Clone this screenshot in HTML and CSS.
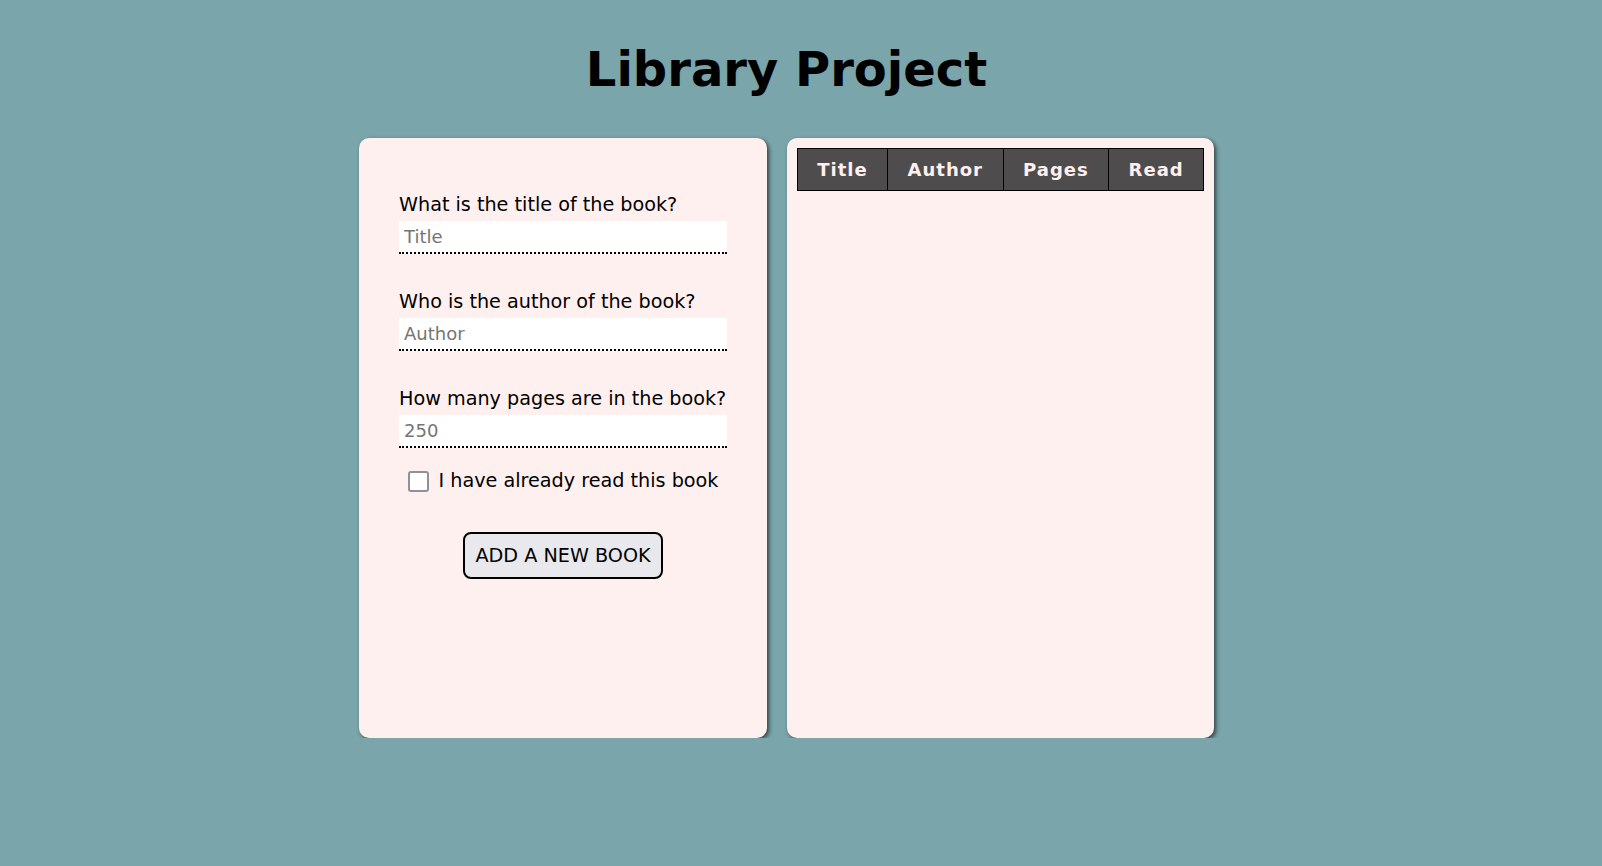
FILE: index.html
```html
<!DOCTYPE html>
<html lang="en">
<head>
<meta charset="utf-8">
<title>Library Project</title>
<link rel="stylesheet" href="styles.css">
</head>
<body>
<div class="app">
  <h1 class="title">Library Project</h1>
  <div class="panels">
    <section class="panel form-panel">
      <form class="book-form">
        <div class="field">
          <label class="label" for="title">What is the title of the book?</label>
          <input class="input" id="title" type="text" placeholder="Title">
        </div>
        <div class="field">
          <label class="label" for="author">Who is the author of the book?</label>
          <input class="input" id="author" type="text" placeholder="Author">
        </div>
        <div class="field field-last">
          <label class="label" for="pages">How many pages are in the book?</label>
          <input class="input" id="pages" type="number" placeholder="250">
        </div>
        <div class="check-row">
          <input class="check" id="read" type="checkbox">
          <label class="check-label" for="read">I have already read this book</label>
        </div>
        <div class="btn-row">
          <button class="btn" type="button">ADD A NEW BOOK</button>
        </div>
      </form>
    </section>
    <section class="panel table-panel">
      <table class="books">
        <thead>
          <tr>
            <th>Title</th>
            <th>Author</th>
            <th>Pages</th>
            <th>Read</th>
          </tr>
        </thead>
        <tbody></tbody>
      </table>
    </section>
  </div>
</div>
</body>
</html>
```

FILE: styles.css
```css
html, body {
  background: #7aa5ab;
}
body {
  margin: 8px;
  font-family: "DejaVu Sans", sans-serif;
  color: #000;
}
.app {
  width: 855px;
  margin-left: 351px;
}
.title {
  font-size: 48px;
  font-weight: bold;
  text-align: center;
  margin: 33px 0 41px;
  line-height: normal;
}
.panels {
  display: flex;
  gap: 20px;
  align-items: flex-start;
}
.panel {
  background: #fff0f0;
  border-radius: 10px;
  height: 600px;
  box-sizing: border-box;
  box-shadow: 2px 2px 4px rgba(0, 0, 0, 0.6);
}
.form-panel {
  width: 408px;
  padding: 56px 40px 0;
}
.table-panel {
  width: 427px;
  padding: 10px;
}
.book-form {
  display: flex;
  flex-direction: column;
}
.field {
  display: flex;
  flex-direction: column;
  margin-bottom: 37px;
}
.field-last {
  margin-bottom: 22px;
}
.label {
  font-size: 19.2px;
  line-height: 22px;
  margin-bottom: 5px;
}
.input {
  height: 33px;
  box-sizing: border-box;
  width: 100%;
  border: none;
  border-bottom: 2px dotted #000;
  background: #fff;
  font-family: "DejaVu Sans", sans-serif;
  font-size: 18px;
  padding: 5px 5px;
  margin: 0;
  outline: none;
}
.input::placeholder {
  color: #757575;
}
.input[type=number] {
  -moz-appearance: textfield;
}
.input::-webkit-outer-spin-button,
.input::-webkit-inner-spin-button {
  -webkit-appearance: none;
  margin: 0;
}
.check-row {
  display: flex;
  align-items: center;
  justify-content: center;
  height: 22px;
}
.check {
  -webkit-appearance: none;
  appearance: none;
  width: 21px;
  height: 21px;
  margin: 0 10px 0 0;
  box-sizing: border-box;
  border: 2px solid #8f8f9d;
  border-radius: 3px;
  background: #fff;
}
.check-label {
  font-size: 19.2px;
  line-height: 22px;
}
.btn-row {
  display: flex;
  justify-content: center;
  margin-top: 40px;
}
.btn {
  font-family: "DejaVu Sans", sans-serif;
  font-size: 19.2px;
  line-height: normal;
  padding: 10px;
  background: #e9e9ed;
  color: #000;
  border: 2px solid #000;
  border-radius: 8px;
}
.books {
  width: 100%;
  border-collapse: collapse;
}
.books th {
  background: #4e4c4d;
  color: #fff0f0;
  border: 1px solid #000;
  font-size: 18px;
  font-weight: bold;
  letter-spacing: 1px;
  padding: 10px 18px;
  line-height: normal;
}
```
